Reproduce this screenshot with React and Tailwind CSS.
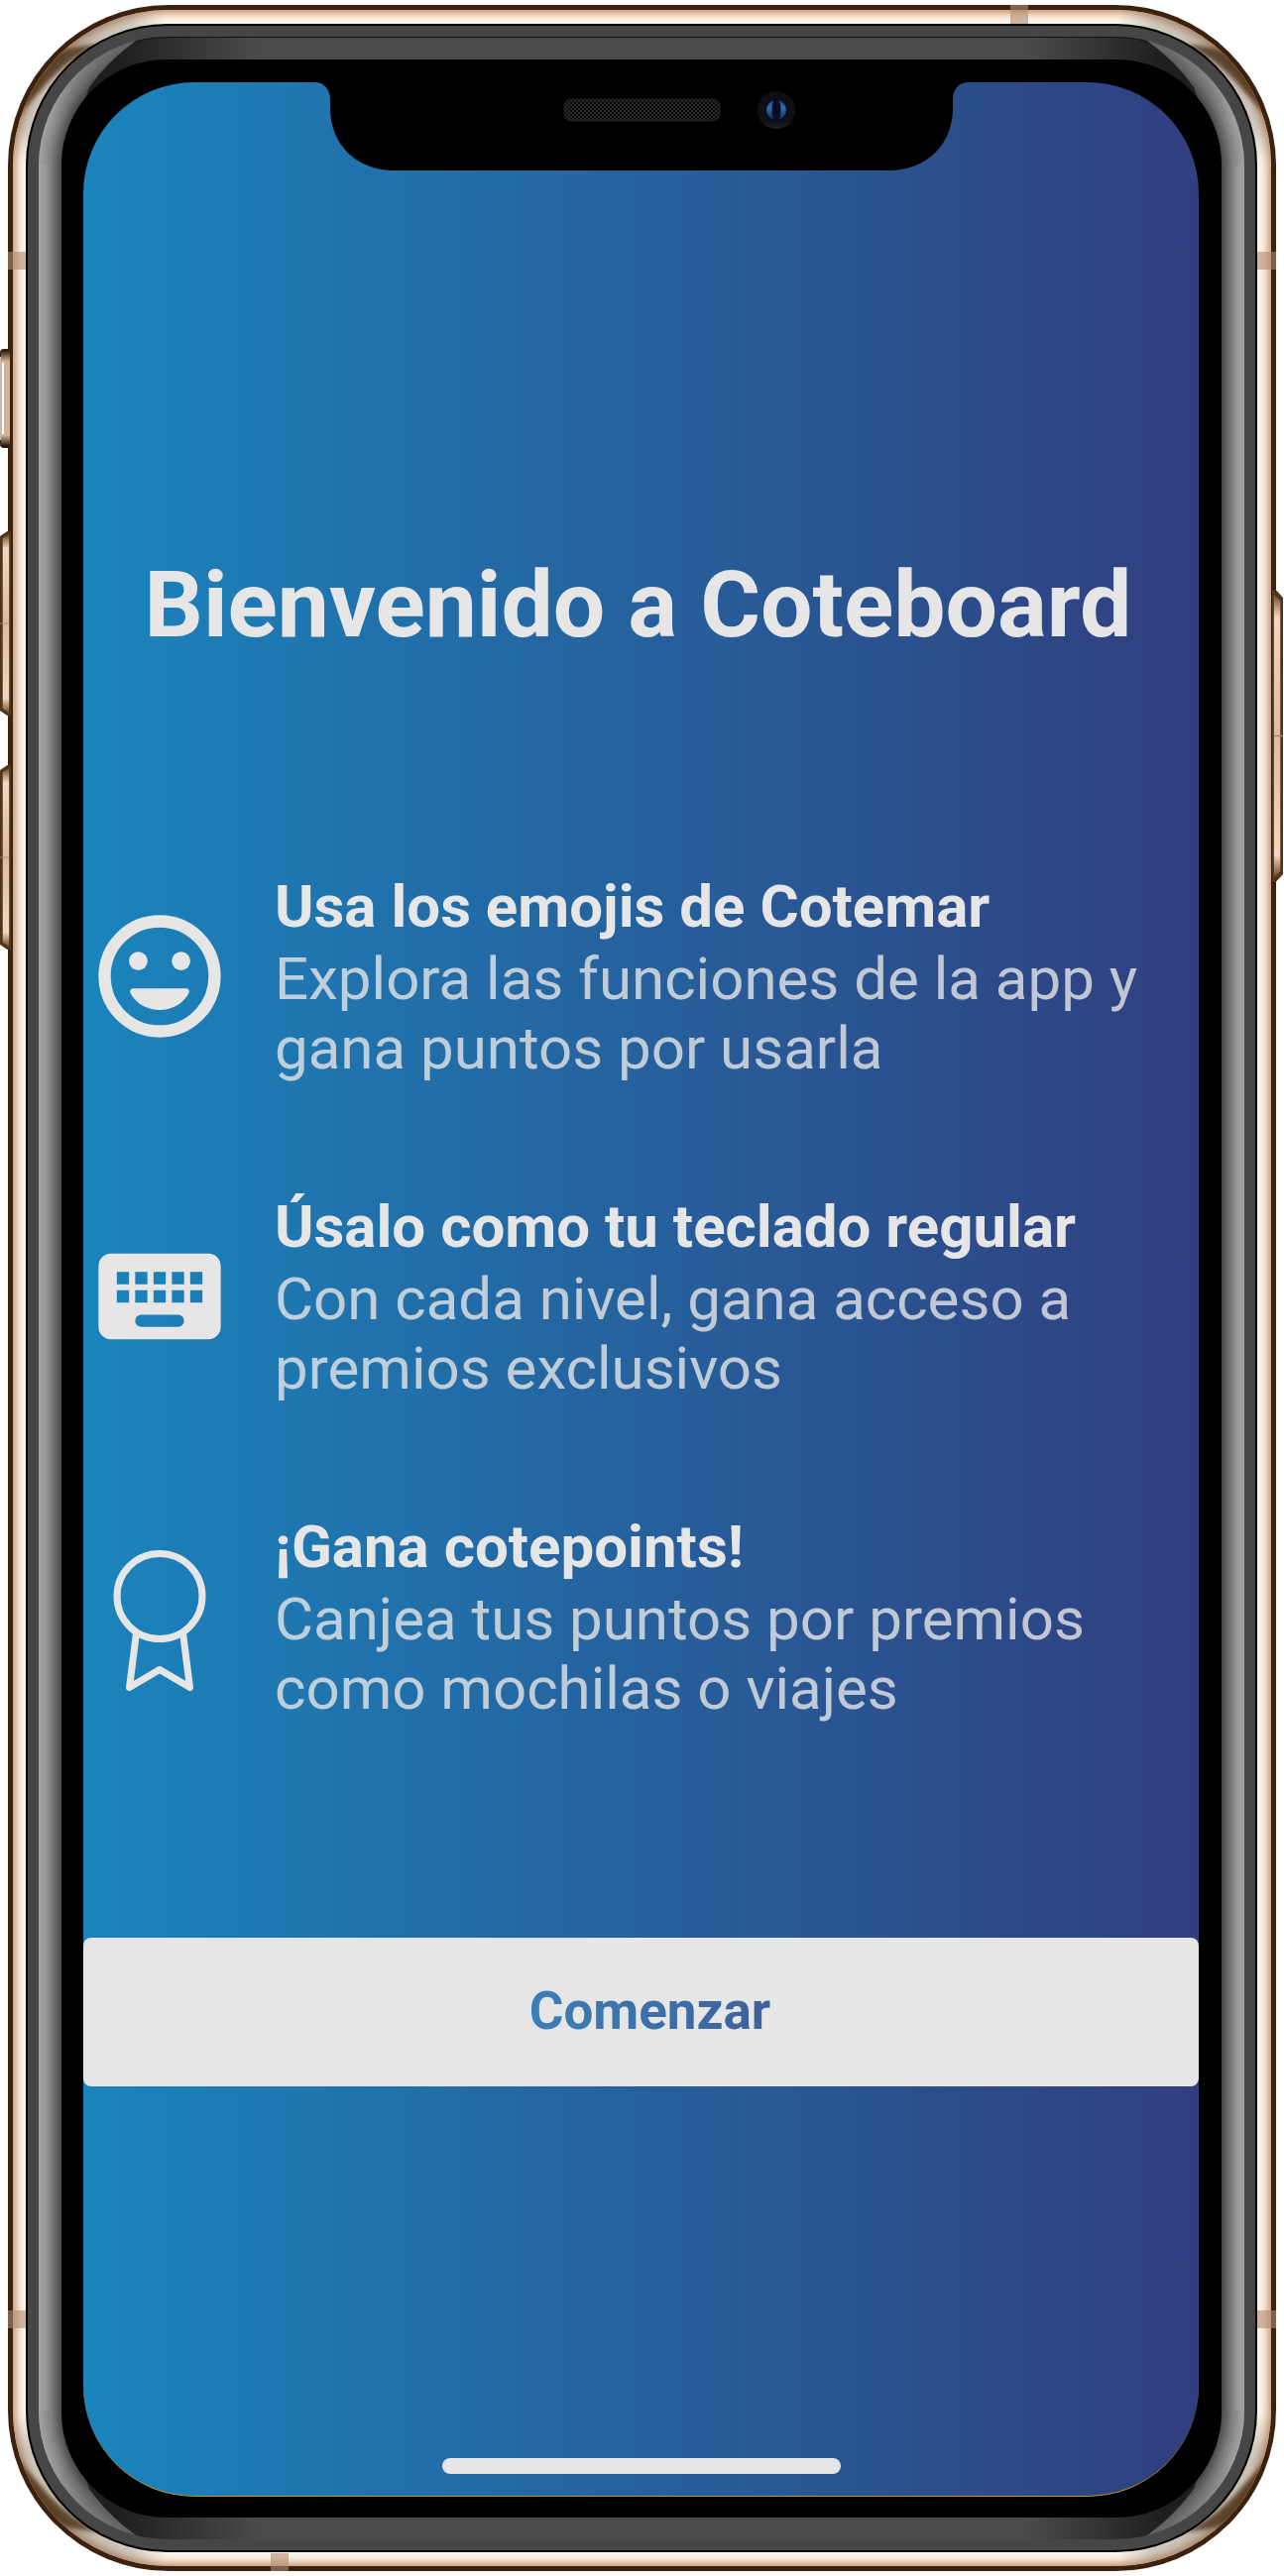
import React from "react";

const features = [
  {
    icon: SmileIcon,
    title: "Usa los emojis de Cotemar",
    text: "Explora las funciones de la app y gana puntos por usarla",
  },
  {
    icon: KeyboardIcon,
    title: "Úsalo como tu teclado regular",
    text: "Con cada nivel, gana acceso a premios exclusivos",
  },
  {
    icon: RibbonIcon,
    title: "¡Gana cotepoints!",
    text: "Canjea tus puntos por premios como mochilas o viajes",
  },
];

const corners = [
  "top-0 left-0",
  "top-0 right-0 -scale-x-100",
  "bottom-0 left-0 -scale-y-100",
  "bottom-0 right-0 -scale-100",
];

function SmileIcon() {
  return (
    <svg viewBox="0 0 24 24" className="w-full" fill="currentColor" aria-hidden="true">
      <circle cx="12" cy="12" r="9" fill="none" stroke="currentColor" strokeWidth="2" />
      <circle cx="8.5" cy="9.5" r="1.52" />
      <circle cx="15.5" cy="9.5" r="1.52" />
      <path d="M7.68 14h8.64c.4 0 .62.38.45.74C15.9 16.4 14.1 17.5 12 17.5S8.1 16.4 7.23 14.74C7.06 14.38 7.28 14 7.68 14z" />
    </svg>
  );
}

function KeyboardIcon() {
  return (
    <svg viewBox="0 0 24 24" className="w-full" fill="currentColor" aria-hidden="true">
      <path
        fillRule="evenodd"
        d="M4 5h16a2 2 0 0 1 2 2v10a2 2 0 0 1-2 2H4a2 2 0 0 1-2-2V7a2 2 0 0 1 2-2zM5 8v2h2V8zM8 8v2h2V8zM11 8v2h2V8zM14 8v2h2V8zM17 8v2h2V8zM5 11v2h2v-2zM8 11v2h2v-2zM11 11v2h2v-2zM14 11v2h2v-2zM17 11v2h2v-2zM9 15a1 1 0 0 0 0 2h6a1 1 0 0 0 0-2z"
      />
    </svg>
  );
}

function RibbonIcon() {
  return (
    <svg
      viewBox="0 0 148 148"
      className="w-full overflow-visible"
      fill="none"
      stroke="currentColor"
      strokeWidth="7"
      strokeLinejoin="round"
      aria-hidden="true"
    >
      <circle cx="74" cy="53.5" r="43" />
      <path d="M50.500 90.500L43.500 145.500L74 127.500L104.500 145.500L97.500 90.500" />
    </svg>
  );
}

function Notch() {
  return (
    <svg viewBox="0 0 660 89" className="mx-auto block h-[89px] w-[660px]" aria-hidden="true">
      <defs>
        <pattern id="mesh" width="4" height="4" patternUnits="userSpaceOnUse">
          <rect width="4" height="4" fill="#0c0c0c" />
          <rect width="2" height="2" fill="#2a2a2a" />
          <rect x="2" y="2" width="2" height="2" fill="#2a2a2a" />
        </pattern>
        <linearGradient id="lens" x1="0" y1="0" x2="0" y2="1">
          <stop offset="0" stopColor="#0d0e12" />
          <stop offset="0.8" stopColor="#101114" />
          <stop offset="1" stopColor="#222326" />
        </linearGradient>
        <linearGradient id="glass" x1="0" y1="0" x2="0" y2="1">
          <stop offset="0" stopColor="#1b4f86" />
          <stop offset="0.4" stopColor="#2c6cab" />
          <stop offset="1" stopColor="#12264d" />
        </linearGradient>
      </defs>
      <path d="M0 0C10 0 16 7 16 18V26C16 63 43 89 80 89H580C617 89 644 63 644 26V18C644 7 650 0 660 0Z" fill="#000" />
      <rect x="252" y="17" width="157" height="22" rx="7" fill="url(#mesh)" stroke="#202020" />
      <circle cx="466" cy="28" r="19" fill="url(#lens)" />
      <circle cx="466" cy="28" r="12" fill="#080c22" />
      <circle cx="466" cy="28" r="10" fill="url(#glass)" />
      <ellipse cx="466" cy="28" rx="4.500" ry="12" fill="#080c22" />
    </svg>
  );
}

function GoldCorner({ place }) {
  return (
    <svg viewBox="0 0 170 170" className={`absolute size-[170px] ${place}`} aria-hidden="true">
      <defs>
        <radialGradient id="tint" cx="45" cy="45" r="115" gradientUnits="userSpaceOnUse">
          <stop offset="0" stopColor="#6f655c" stopOpacity="0.45" />
          <stop offset="0.7" stopColor="#6f655c" stopOpacity="0.3" />
          <stop offset="1" stopColor="#6f655c" stopOpacity="0" />
        </radialGradient>
        <filter id="soft">
          <feGaussianBlur stdDeviation="2" />
        </filter>
      </defs>
      <rect width="170" height="170" fill="url(#tint)" />
      <path d="M6 108C12 72 36 42 60 38L86 34C58 50 42 64 29 80C20 90 12 98 6 108Z" fill="#482a14" fillOpacity="0.8" filter="url(#soft)" />
    </svg>
  );
}

function BevelCorner({ place }) {
  return (
    <svg viewBox="0 0 160 160" className={`absolute size-[160px] ${place}`} aria-hidden="true">
      <defs>
        <radialGradient id="bevel" cx="130" cy="130" r="131" gradientUnits="userSpaceOnUse">
          <stop offset="0.8" stopColor="#404040" />
          <stop offset="0.9" stopColor="#808080" />
          <stop offset="0.97" stopColor="#9c9c9c" />
          <stop offset="1" stopColor="#a4a4a4" />
        </radialGradient>
        <linearGradient id="tip" x1="95" y1="5" x2="20" y2="90" gradientUnits="userSpaceOnUse">
          <stop offset="0" stopColor="#000" stopOpacity="0.4" />
          <stop offset="1" stopColor="#000" stopOpacity="0" />
        </linearGradient>
      </defs>
      <path d="M0 0H98V4Q70 24 51 51L23 130H0Z" fill="url(#bevel)" />
      <path d="M0 0H98V4Q70 24 51 51L23 130H0Z" fill="url(#tip)" />
    </svg>
  );
}

function SideKey({ className, flip }) {
  return (
    <svg
      viewBox="0 0 12 186"
      preserveAspectRatio="none"
      className={`absolute w-[11px] ${className} ${flip ? "-scale-x-100" : ""}`}
      aria-hidden="true"
    >
      <defs>
        <linearGradient id="key" x1="0" y1="0" x2="0" y2="1">
          <stop offset="0" stopColor="#6b4a2c" />
          <stop offset="0.08" stopColor="#f5d6c2" />
          <stop offset="0.5" stopColor="#dcbca6" />
          <stop offset="0.92" stopColor="#f5d6c2" />
          <stop offset="1" stopColor="#6b4a2c" />
        </linearGradient>
      </defs>
      <path d="M0 5L8 0H12V186H8L0 181Z" fill="#4f3519" />
      <path d="M3 7L10 3V183L3 179Z" fill="url(#key)" />
      <path d="M0 93H10" stroke="#a88a74" />
    </svg>
  );
}

function MuteSwitch() {
  return (
    <svg viewBox="0 0 12 100" className="absolute top-[347px] -left-2 h-[100px] w-3" aria-hidden="true">
      <defs>
        <linearGradient id="mute" x1="0" y1="0" x2="0" y2="1">
          <stop offset="0" stopColor="#241303" />
          <stop offset="0.12" stopColor="#d3b196" />
          <stop offset="0.88" stopColor="#d3b196" />
          <stop offset="1" stopColor="#120900" />
        </linearGradient>
      </defs>
      <rect x="0" y="0" width="12" height="100" rx="4" fill="#3a2410" />
      <rect x="1" y="1" width="9" height="98" rx="2" fill="url(#mute)" />
      <rect x="2" y="14" width="2" height="72" fill="#fff" />
      <rect x="0" y="8" width="1" height="84" fill="#c9bcb2" />
    </svg>
  );
}

function Antennas() {
  return (
    <>
      <span className="absolute top-[249px] left-0 h-[18px] w-[18px] bg-[#b08a70]/60" />
      <span className="absolute top-[249px] right-0 h-[18px] w-[19px] bg-[#b08a70]/60" />
      <span className="absolute bottom-[245px] left-0 h-[18px] w-[18px] bg-[#b08a70]/60" />
      <span className="absolute right-0 bottom-[245px] h-[18px] w-[19px] bg-[#b08a70]/60" />
      <span className="absolute top-0 right-[250px] h-[19px] w-[18px] bg-[#b08a70]/60" />
      <span className="absolute bottom-0 left-[265px] h-[18px] w-[18px] bg-[#b08a70]/60" />
    </>
  );
}

function PhoneFrame({ children }) {
  return (
    <div className="relative rounded-[162px] bg-[#3c210e] p-[5px]">
      <SideKey className="top-[531px] -left-2 h-[186px]" />
      <SideKey className="top-[767px] -left-2 h-[186px]" />
      <SideKey className="top-[590px] -right-[7px] h-[295px]" flip />
      <MuteSwitch />
      <div className="relative overflow-hidden rounded-[157px] bg-[#fcf5eb] py-[14px] pr-[14px] pl-[13px] shadow-[inset_0_0_9px_3px_#c08a60]">
        {corners.map((place) => (
          <GoldCorner key={place} place={place} />
        ))}
        <div className="relative rounded-[143px] bg-black p-[2px]">
          <div className="rounded-[141px] bg-[#464646] p-[11px]">
            <div className="relative overflow-hidden rounded-[130px] px-[23px] pt-[23px] pb-[22px] shadow-[inset_0_1px_0_#111] [background:linear-gradient(to_right,#a4a4a4,#9a9a9a_30%,#484848)_left/23px_100%_no-repeat,linear-gradient(to_left,#a4a4a4,#9a9a9a_30%,#484848)_right/23px_100%_no-repeat,linear-gradient(to_right,#1e1e1e_80px,#4a4a4a_220px,#4a4a4a_calc(100%-220px),#1e1e1e_calc(100%-80px))]">
              {corners.map((place) => (
                <BevelCorner key={place} place={place} />
              ))}
              <div className="relative rounded-[106px] bg-black pt-[23px] pr-[23px] pb-[21px] pl-[22px]">{children}</div>
            </div>
          </div>
        </div>
      </div>
      <Antennas />
    </div>
  );
}

export default function App() {
  return (
    <main className="min-h-screen bg-white px-2 pt-[5px] pb-1.5 font-['Roboto',sans-serif] text-[#e6e6e6]">
      <PhoneFrame>
        <div className="flex flex-col overflow-hidden rounded-[112px] border-b border-[#c8902c] bg-[linear-gradient(to_right,#1b84bc,#303e7e)]">
          <Notch />
          <h1 className="mt-[383px] pr-1.5 text-center text-[93px] leading-[112px] font-bold">Bienvenido a Coteboard</h1>
          <ul className="mt-[210px] flex flex-col gap-[107px]">
            {features.map(({ icon: Icon, title, text }) => (
              <li key={title} className="flex items-center gap-[42px] pl-[3px]">
                <div className="w-[148px] shrink-0">
                  <Icon />
                </div>
                <div className="min-w-0 flex-1 pr-10 text-[60px]">
                  <h2 className="leading-[76px] font-bold">{title}</h2>
                  <p className="leading-[70px] opacity-80">{text}</p>
                </div>
              </li>
            ))}
          </ul>
          <button type="button" className="mt-[216px] h-[150px] w-full rounded-lg bg-[#e6e6e6] pl-[18px] text-[53px] font-bold">
            <span className="bg-[linear-gradient(to_right,#3a80b6,#40609a)] bg-clip-text text-transparent">Comenzar</span>
          </button>
          <div className="mx-auto mt-[375px] mb-[22px] h-4 w-[402px] rounded-full bg-[#e6e6e6]" />
        </div>
      </PhoneFrame>
    </main>
  );
}
